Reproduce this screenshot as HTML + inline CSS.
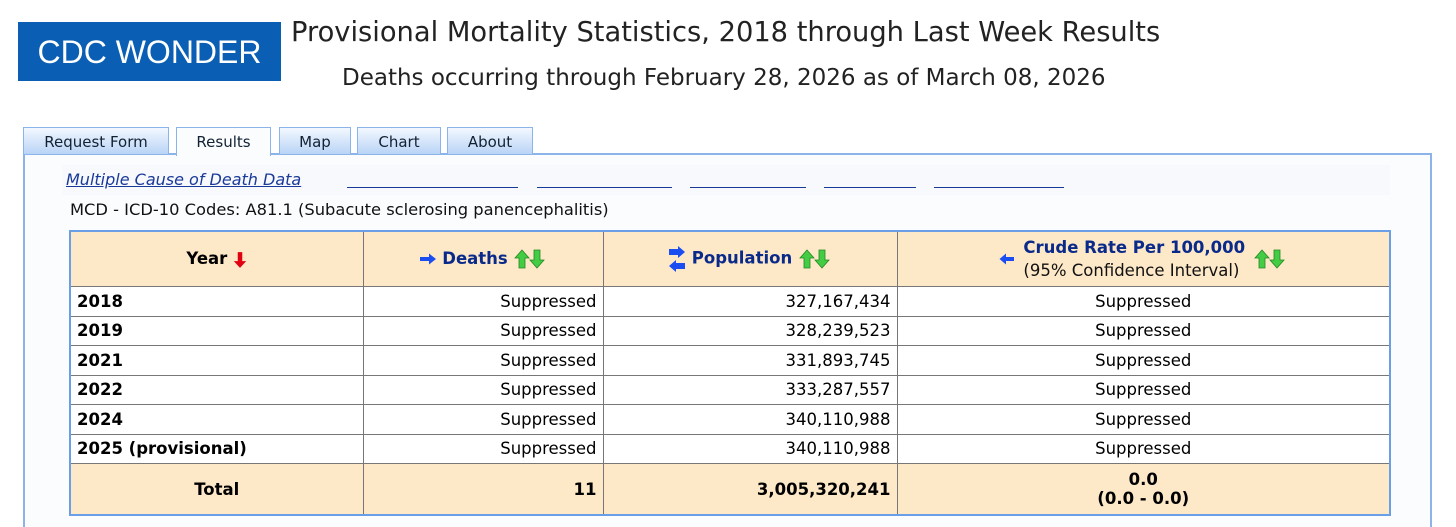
<!DOCTYPE html>
<html style="height:527px;overflow:hidden"><head><meta charset="utf-8"><style>
body{margin:0;width:1456px;height:527px;overflow:hidden;background:#fff;position:relative;font-family:"DejaVu Sans",Verdana,sans-serif}
.abs{position:absolute}
.logo{left:18px;top:22px;width:263px;height:59px;background:#0a5fb4;color:#fff;font:32px "Liberation Sans",sans-serif;line-height:61px;text-align:center}
.t1{left:291px;top:17px;font:27.3px "DejaVu Sans",sans-serif;color:#222;white-space:nowrap}
.t2{left:342px;top:65px;font:23px "DejaVu Sans",sans-serif;color:#222;white-space:nowrap}
.tab{top:127px;height:27px;border:1px solid #8ab4ea;border-bottom:none;background:linear-gradient(#f3f8ff,#b9d4f6);font-size:15px;color:#123;text-align:center;line-height:29px;box-sizing:border-box}
.panel{left:23px;top:153px;width:1409px;height:374px;border:2px solid #8ab4ea;border-bottom:none;background:#fbfcfe;box-sizing:border-box}
table{position:absolute;left:69px;top:230px;border-collapse:collapse;border:2px solid #6a9ee6;table-layout:fixed;width:1320px}
td{border:1px solid #777;font-size:16.5px;padding:0 6px;height:28.5px;background:#fff;color:#000}
th{border:1px solid #777;background:#fde8c8;font-size:16.5px;color:#0a2a8a;height:52px}
tr.tot td{background:#fde8c8;font-weight:bold;height:50px}
.r{text-align:right}.c{text-align:center}
svg{vertical-align:middle}
</style></head><body>
<div class="abs logo">CDC WONDER</div>
<div class="abs t1">Provisional Mortality Statistics, 2018 through Last Week Results</div>
<div class="abs t2">Deaths occurring through February 28, 2026 as of March 08, 2026</div>
<div class="abs panel"></div>
<div class="abs tab" style="left:23px;width:146px">Request Form</div>
<div class="abs tab" style="left:176px;width:95px;background:#fbfcfe;height:29px">Results</div>
<div class="abs tab" style="left:279px;width:72px">Map</div>
<div class="abs tab" style="left:357px;width:84px">Chart</div>
<div class="abs tab" style="left:447px;width:86px">About</div>
<div class="abs" style="left:62px;top:165px;width:1328px;height:30px;background:#f7f9fc"></div>
<div class="abs" style="left:66px;top:170px;font-size:16px;font-style:italic;color:#1a3a9a;text-decoration:underline">Multiple Cause of Death Data</div>
<div class="abs" style="left:347px;top:187px;width:171px;border-top:1px solid #1a3a9a"></div>
<div class="abs" style="left:537px;top:187px;width:135px;border-top:1px solid #1a3a9a"></div>
<div class="abs" style="left:690px;top:187px;width:116px;border-top:1px solid #1a3a9a"></div>
<div class="abs" style="left:824px;top:187px;width:92px;border-top:1px solid #1a3a9a"></div>
<div class="abs" style="left:934px;top:187px;width:130px;border-top:1px solid #1a3a9a"></div>
<div class="abs" style="left:70px;top:200px;font-size:16.3px;color:#111">MCD - ICD-10 Codes: A81.1 (Subacute sclerosing panencephalitis)</div>
<table>
<colgroup><col style="width:293px"><col style="width:240px"><col style="width:294px"><col style="width:493px"></colgroup>
<tr><th style="color:#000">Year <svg width="14" height="18" viewBox="0 0 12 16"><path d="M4 1h4v8h3.5L6 15 0.5 9H4z" fill="#e00010"/></svg></th>
<th><svg width="18" height="12" viewBox="0 0 18 12"><path d="M1 4h9V0.5L17 6l-7 5.5V8H1z" fill="#1a4ef0"/></svg> Deaths <svg width="34" height="20" viewBox="0 0 34 20"><path d="M9 1l7 8h-4v10H6V9H2z" fill="#4c4" stroke="#282" stroke-width=".8"/><path d="M21 1h6v10h4l-7 8-7-8h4z" fill="#4c4" stroke="#282" stroke-width=".8"/></svg></th>
<th><svg width="18" height="26" viewBox="0 0 18 26"><path d="M1 3h9V0l7 6-7 6V9H1z" fill="#1a4ef0"/><path d="M17 17H8v-3l-7 6 7 6v-3h9z" fill="#1a4ef0"/></svg> Population <svg width="34" height="20" viewBox="0 0 34 20"><path d="M9 1l7 8h-4v10H6V9H2z" fill="#4c4" stroke="#282" stroke-width=".8"/><path d="M21 1h6v10h4l-7 8-7-8h4z" fill="#4c4" stroke="#282" stroke-width=".8"/></svg></th>
<th><div style="display:inline-flex;align-items:center;gap:8px"><svg width="16" height="12" viewBox="0 0 16 12"><path d="M15 4H7V0.5L0.5 6 7 11.5V8h8z" fill="#1a4ef0"/></svg><div style="text-align:left;line-height:23px">Crude Rate Per 100,000<br><span style="font-weight:normal;color:#111">(95% Confidence Interval)</span></div><svg width="34" height="20" viewBox="0 0 34 20"><path d="M9 1l7 8h-4v10H6V9H2z" fill="#4c4" stroke="#282" stroke-width=".8"/><path d="M21 1h6v10h4l-7 8-7-8h4z" fill="#4c4" stroke="#282" stroke-width=".8"/></svg></div></th></tr>
<tr><td><b>2018</b></td><td class="r">Suppressed</td><td class="r">327,167,434</td><td class="c">Suppressed</td></tr>
<tr><td><b>2019</b></td><td class="r">Suppressed</td><td class="r">328,239,523</td><td class="c">Suppressed</td></tr>
<tr><td><b>2021</b></td><td class="r">Suppressed</td><td class="r">331,893,745</td><td class="c">Suppressed</td></tr>
<tr><td><b>2022</b></td><td class="r">Suppressed</td><td class="r">333,287,557</td><td class="c">Suppressed</td></tr>
<tr><td><b>2024</b></td><td class="r">Suppressed</td><td class="r">340,110,988</td><td class="c">Suppressed</td></tr>
<tr><td><b>2025 (provisional)</b></td><td class="r">Suppressed</td><td class="r">340,110,988</td><td class="c">Suppressed</td></tr>
<tr class="tot"><td class="c">Total</td><td class="r">11</td><td class="r">3,005,320,241</td><td class="c">0.0<br>(0.0 - 0.0)</td></tr>
</table>
</body></html>
